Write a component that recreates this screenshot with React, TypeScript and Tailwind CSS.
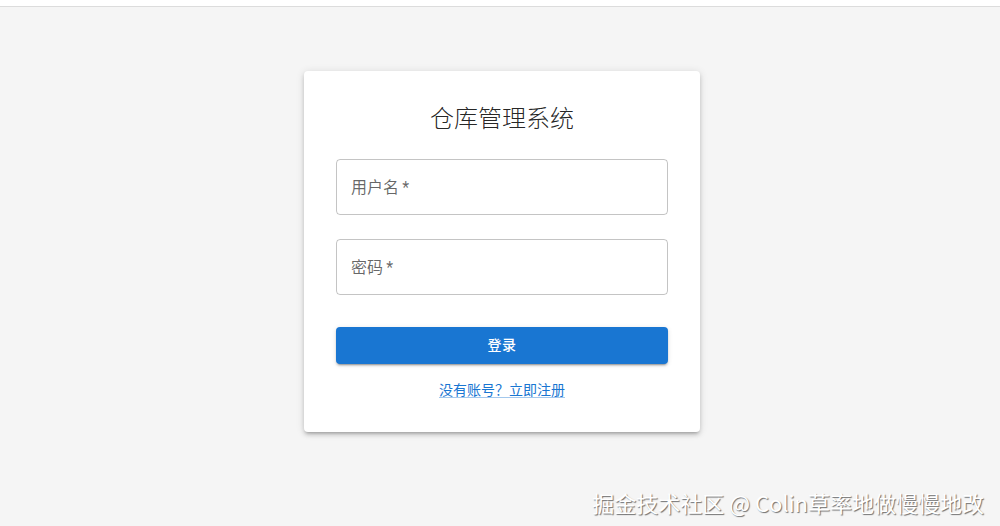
import React from "react";

const cjk = "font-['Roboto','Noto_Sans_CJK_SC',sans-serif]";

function Field({ label, type = "text" }: { label: string; type?: string }) {
  return (
    <div className="mt-4 mb-2">
      <div className="relative h-14 rounded-[4px] border border-[rgba(0,0,0,0.23)] flex items-center px-[14px]">
        <input
          type={type}
          className="absolute inset-0 w-full h-full bg-transparent outline-none px-[14px] text-base"
        />
        <span className="text-base leading-[23px] text-[rgba(0,0,0,0.6)] pointer-events-none">
          {label}{"\u2009"}*
        </span>
      </div>
    </div>
  );
}

export default function App() {
  return (
    <div className={`relative min-h-[526px] bg-[#f5f5f5] ${cjk}`}>
      {/* thin white strip above content */}
      <div className="h-[7px] bg-white border-b border-[#dcdcdc]" />

      <div className="flex justify-center pl-1 pt-16">
        <div className="w-[396px] flex flex-col bg-white rounded-[4px] p-8 shadow-[0_3px_3px_-2px_rgba(0,0,0,0.2),0_3px_4px_0_rgba(0,0,0,0.14),0_1px_8px_0_rgba(0,0,0,0.12)]">
          <h1 className="text-center text-2xl leading-8 font-light text-[rgba(0,0,0,0.87)] mb-2">
            仓库管理系统
          </h1>

          <Field label="用户名" />
          <Field label="密码" type="password" />

          <button className="mt-6 w-full h-[36.5px] rounded-[4px] bg-[#1976d2] text-white text-sm font-medium tracking-[0.4px] shadow-[0_3px_1px_-2px_rgba(0,0,0,0.2),0_2px_2px_0_rgba(0,0,0,0.14),0_1px_5px_0_rgba(0,0,0,0.12)]">
            登录
          </button>

          <div className="mt-4 text-center leading-5">
            <a
              href="#"
              className="text-sm text-[#1976d2] underline decoration-[rgba(25,118,210,0.4)] underline-offset-2"
            >
              没有账号？立即注册
            </a>
          </div>
        </div>
      </div>

      {/* watermark overlay */}
      <div className="absolute right-4 bottom-[10px] text-[22px] leading-7 text-white [text-shadow:1px_1px_1px_rgba(0,0,0,0.55)] font-['Noto_Sans_CJK_SC',sans-serif]">
        掘金技术社区 @ Colin草率地做慢慢地改
      </div>
    </div>
  );
}
